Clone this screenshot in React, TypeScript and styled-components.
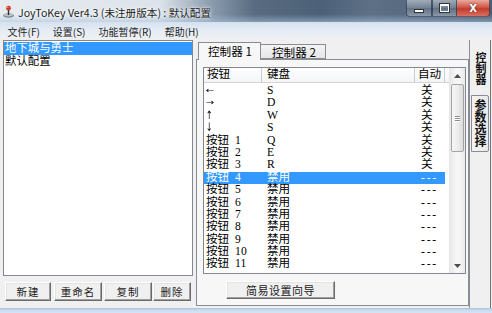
import React from 'react'
import styled, { createGlobalStyle } from 'styled-components'

const GlobalStyle = createGlobalStyle`
  html, body {
    margin: 0;
    padding: 0;
    background: #f0f0f0;
  }
  body {
    font-family: "Noto Sans CJK SC", "Liberation Sans", sans-serif;
  }
`

const listFont = `"Liberation Serif", "Noto Sans CJK SC", serif`

const Window = styled.div`
  width: 492px;
  height: 313px;
  display: flex;
  flex-direction: column;
  background: #f0f0f0;
  overflow: hidden;
`

const TitleBar = styled.div`
  height: 22px;
  flex: none;
  display: flex;
  align-items: flex-start;
  background:
    linear-gradient(180deg, rgba(0, 0, 0, 0) 65%, rgba(170, 195, 222, 0.55) 100%),
    linear-gradient(90deg, #e7ecf1 0px, #dce3ea 160px, #8a9bad 212px, #586b80 255px, #4c6077 320px, #5d7086 370px, #4a5e75 100%);
`

const AppIcon = styled.svg`
  width: 13px;
  height: 13px;
  margin: 5px 3px 0 2px;
  flex: none;
`

const TitleText = styled.div`
  margin-top: 5px;
  font-size: 10.6px;
  line-height: 16px;
  color: #1a1a1a;
  white-space: nowrap;
  text-shadow: 0 0 4px #fff, 0 0 2px #fff;
`

const Captions = styled.div`
  margin-left: auto;
  margin-right: 2px;
  display: flex;
  height: 17px;
`

const CaptionButton = styled.div<{ $w: number; $close?: boolean }>`
  width: ${({ $w }) => $w}px;
  height: 100%;
  box-sizing: border-box;
  display: flex;
  align-items: center;
  justify-content: center;
  border: 1px solid rgba(30, 40, 55, 0.6);
  border-top: none;
  border-left: ${({ $close }) => ($close ? 'none' : '1px solid rgba(30, 40, 55, 0.6)')};
  border-radius: ${({ $close }) => ($close ? '0 0 4px 0' : '0')};
  background: ${({ $close }) =>
    $close
      ? 'linear-gradient(180deg, #e9a99c 0%, #d1584a 45%, #c23b2e 55%, #d8705e 100%)'
      : 'linear-gradient(180deg, rgba(255,255,255,0.45) 0%, rgba(255,255,255,0.18) 50%, rgba(255,255,255,0.08) 51%, rgba(255,255,255,0.3) 100%)'};
  color: #fff;
  font-family: "DejaVu Sans", sans-serif;
  font-weight: bold;
  font-size: 10px;
  text-shadow: 0 0 2px #333;
`

const FirstCaption = styled(CaptionButton)`
  border-radius: 0 0 0 4px;
`

const MinGlyph = styled.span`
  width: 8px;
  height: 2px;
  margin-top: 5px;
  background: #fff;
  border: 1px solid #333;
`

const MaxGlyph = styled.span`
  width: 7px;
  height: 5px;
  border: 1px solid #fff;
  border-top-width: 2px;
  outline: 1px solid #333;
`

const MenuBar = styled.div`
  height: 18px;
  flex: none;
  display: flex;
  align-items: center;
  padding-left: 1px;
  background: linear-gradient(180deg, #d6e1ee 0%, #e6edf6 50%, #f0f0f0 100%);
  font-size: 10px;
  color: #1e1e1e;
`

const MenuItem = styled.span`
  padding: 0 6.5px;
  white-space: nowrap;
`

const Body = styled.div`
  flex: 1;
  display: flex;
  min-height: 0;
`

const LeftPane = styled.div`
  width: 192px;
  margin-left: 3px;
  display: flex;
  flex-direction: column;
  padding-bottom: 7px;
`

const ProfileList = styled.div`
  flex: 1;
  background: #fff;
  border: 1px solid #828790;
  padding-top: 1px;
  margin-bottom: 6px;
`

const ProfileItem = styled.div<{ $selected?: boolean }>`
  height: 12.5px;
  line-height: 12.5px;
  padding-left: 1px;
  font-family: ${listFont};
  font-size: 11.4px;
  color: ${({ $selected }) => ($selected ? '#fff' : '#000')};
  background: ${({ $selected }) => ($selected ? '#3399ff' : 'transparent')};
  white-space: nowrap;
`

const ButtonRow = styled.div`
  display: flex;
  height: 19px;
  padding-left: 2px;
`

const RaisedButton = styled.div<{ $w: number; $gap?: number }>`
  width: ${({ $w }) => $w}px;
  margin-left: ${({ $gap }) => $gap ?? 0}px;
  height: 100%;
  box-sizing: border-box;
  display: flex;
  align-items: center;
  justify-content: center;
  background: #f0f0f0;
  border: 1px solid;
  border-color: #ffffff #6a6a6a #6a6a6a #ffffff;
  box-shadow: inset -1px -1px #a0a0a0, inset 1px 1px #e3e3e3;
  font-size: 10.5px;
  color: #202020;
  letter-spacing: 1px;
  white-space: nowrap;
`

const RightPane = styled.div`
  flex: 1;
  display: flex;
  margin-left: 3px;
`

const TabArea = styled.div`
  width: 273px;
  display: flex;
  flex-direction: column;
  padding-top: 2px;
  padding-bottom: 2px;
`

const TabStrip = styled.div`
  height: 17px;
  display: flex;
  align-items: flex-end;
  padding-left: 2px;
  position: relative;
  z-index: 1;
`

const Tab = styled.div<{ $w: number; $active?: boolean }>`
  width: ${({ $w }) => $w}px;
  height: ${({ $active }) => ($active ? 18 : 15)}px;
  margin-bottom: ${({ $active }) => ($active ? -1 : 0)}px;
  box-sizing: border-box;
  border: 1px solid #898c95;
  border-bottom: ${({ $active }) => ($active ? 'none' : '1px solid #898c95')};
  border-left: ${({ $active }) => ($active ? '1px solid #898c95' : 'none')};
  background: ${({ $active }) => ($active ? '#f7f7f7' : 'linear-gradient(180deg, #f4f4f4, #e6e6e6)')};
  padding-left: ${({ $active }) => ($active ? 9 : 11)}px;
  font-size: 11.6px;
  line-height: ${({ $active }) => ($active ? 16 : 14)}px;
  color: #000;
  white-space: nowrap;
`

const TabPanel = styled.div`
  flex: 1;
  display: flex;
  flex-direction: column;
  border: 1px solid #898c95;
  background: #f7f7f7;
  padding: 7px 2px 6px 6px;
  min-height: 0;
`

const ListView = styled.div`
  flex: 1;
  display: flex;
  background: #fff;
  border: 1px solid #828790;
  min-height: 0;
  overflow: hidden;
`

const Table = styled.div`
  flex: 1;
  display: flex;
  flex-direction: column;
  font-family: ${listFont};
  font-size: 11.6px;
  color: #000;
`

const HeaderRow = styled.div`
  height: 14px;
  flex: none;
  display: flex;
  border-bottom: 1px solid #d5d5d5;
  background: linear-gradient(180deg, #ffffff, #f3f4f6);
`

const HeaderCell = styled.div<{ $w?: number; $pad: number }>`
  width: ${({ $w }) => ($w ? `${$w}px` : 'auto')};
  flex: ${({ $w }) => ($w ? 'none' : '1')};
  box-sizing: border-box;
  padding-left: ${({ $pad }) => $pad}px;
  border-right: ${({ $w }) => ($w ? '1px solid #c9ccd2' : 'none')};
  line-height: 14px;
  white-space: nowrap;
`

const Rows = styled.div`
  padding-top: 2px;
`

const Row = styled.div<{ $selected?: boolean }>`
  display: grid;
  grid-template-columns: 58px 153px 30px;
  width: max-content;
  height: 12.4px;
  line-height: 12.4px;
  color: ${({ $selected }) => ($selected ? '#fff' : '#000')};
  background: ${({ $selected }) => ($selected ? '#3399ff' : 'transparent')};
`

const Cell = styled.div<{ $pad: number }>`
  padding-left: ${({ $pad }) => $pad}px;
  white-space: nowrap;
  word-spacing: 3px;
  overflow: visible;
`

const Arrow = styled.span<{ $tall?: boolean }>`
  display: inline-block;
  font-family: "DejaVu Sans", sans-serif;
  font-size: 10px;
  line-height: 12px;
  color: #000;
  filter: grayscale(1);
  transform: ${({ $tall }) => ($tall ? 'scale(0.8, 1.15)' : 'scaleY(0.8)')};
  transform-origin: left center;
`

const Dashes = styled.span`
  letter-spacing: 1.8px;
`

const ScrollBar = styled.div`
  width: 15px;
  flex: none;
  display: flex;
  flex-direction: column;
  align-items: center;
  border-left: 1px solid #e6e6e6;
  background: linear-gradient(90deg, #e9e9e9 0%, #f6f6f6 40%, #f6f6f6 60%, #e9e9e9 100%);
`

const ScrollArrow = styled.div`
  width: 15px;
  height: 15px;
  display: flex;
  align-items: center;
  justify-content: center;
`

const Thumb = styled.div`
  width: 13px;
  height: 68px;
  margin-top: 1px;
  box-sizing: border-box;
  border: 1px solid #a3a3a3;
  border-radius: 2px;
  background: linear-gradient(90deg, #f7f7f7 0%, #ededed 50%, #dcdcdc 100%);
  display: flex;
  flex-direction: column;
  align-items: center;
  justify-content: center;
  gap: 1px;
`

const Grip = styled.span`
  width: 5px;
  height: 1px;
  background: #8a8a8a;
  box-shadow: 0 1px #fff;
`

const Track = styled.div`
  flex: 1;
`

const WizardRow = styled.div`
  display: flex;
  margin-top: 7px;
  padding-left: 23px;
`

const WizardButton = styled(RaisedButton)`
  height: 18px;
  font-size: 11px;
  letter-spacing: 0.5px;
`

const VTabs = styled.div`
  width: 20px;
  display: flex;
  flex-direction: column;
  border-left: 1px solid #898c95;
  border-right: 1px solid #6f7378;
  margin-right: 1px;
`

const VTab = styled.div<{ $active?: boolean }>`
  writing-mode: vertical-rl;
  font-size: ${({ $active }) => ($active ? 11 : 12)}px;
  font-weight: bold;
  color: #111;
  line-height: 16px;
  box-sizing: border-box;
  ${({ $active }) =>
    $active
      ? `
    height: 54px;
    padding-top: 12px;
    padding-right: 1px;
  `
      : `
    height: 57px;
    margin: 1px 1px 0 1px;
    border: 1px solid #898c95;
    border-radius: 0 2px 2px 0;
    background: linear-gradient(90deg, #f4f4f4, #e8e8e8);
    padding-top: 3px;
  `}
`

const BottomFrame = styled.div`
  height: 5px;
  flex: none;
  background: linear-gradient(180deg, #a8bfd9 0%, #c9dbef 40%, #d6e4f3 100%);
`

type Line = {
  button: string
  key: string
  auto: string
  arrow?: 'h' | 'v'
}

const lines: Line[] = [
  { button: '←', key: 'S', auto: '关', arrow: 'h' },
  { button: '→', key: 'D', auto: '关', arrow: 'h' },
  { button: '↑', key: 'W', auto: '关', arrow: 'v' },
  { button: '↓', key: 'S', auto: '关', arrow: 'v' },
  { button: '按钮 1', key: 'Q', auto: '关' },
  { button: '按钮 2', key: 'E', auto: '关' },
  { button: '按钮 3', key: 'R', auto: '关' },
  ...[4, 5, 6, 7, 8, 9, 10, 11].map((n) => ({
    button: `按钮 ${n}`,
    key: '禁用',
    auto: '---',
  })),
]

const SELECTED_LINE = 7

const App = () => {
  return (
    <>
      <GlobalStyle />
      <Window>
        <TitleBar>
          <AppIcon viewBox="0 0 13 13">
            <ellipse cx="6.5" cy="10.5" rx="5.5" ry="2.2" fill="#7d8790" />
            <ellipse cx="6.5" cy="9.8" rx="4.6" ry="1.6" fill="#b9c1c8" />
            <rect x="5.8" y="3.5" width="1.4" height="6.5" fill="#2b2b2b" />
            <circle cx="6.5" cy="3.2" r="2.4" fill="#d23a2a" />
            <circle cx="5.8" cy="2.5" r="0.8" fill="#f4a89c" />
          </AppIcon>
          <TitleText>JoyToKey Ver4.3 (未注册版本) : 默认配置</TitleText>
          <Captions>
            <FirstCaption $w={26}>
              <MinGlyph />
            </FirstCaption>
            <CaptionButton $w={25}>
              <MaxGlyph />
            </CaptionButton>
            <CaptionButton $w={33} $close>
              X
            </CaptionButton>
          </Captions>
        </TitleBar>

        <MenuBar>
          <MenuItem>文件(F)</MenuItem>
          <MenuItem>设置(S)</MenuItem>
          <MenuItem>功能暂停(R)</MenuItem>
          <MenuItem>帮助(H)</MenuItem>
        </MenuBar>

        <Body>
          <LeftPane>
            <ProfileList>
              <ProfileItem $selected>地下城与勇士</ProfileItem>
              <ProfileItem>默认配置</ProfileItem>
            </ProfileList>
            <ButtonRow>
              <RaisedButton $w={46}>新建</RaisedButton>
              <RaisedButton $w={48} $gap={3}>重命名</RaisedButton>
              <RaisedButton $w={48} $gap={2}>复制</RaisedButton>
              <RaisedButton $w={38} $gap={1}>删除</RaisedButton>
            </ButtonRow>
          </LeftPane>

          <RightPane>
            <TabArea>
              <TabStrip>
                <Tab $w={63} $active>控制器 1</Tab>
                <Tab $w={65}>控制器 2</Tab>
              </TabStrip>
              <TabPanel>
                <ListView>
                  <Table>
                    <HeaderRow>
                      <HeaderCell $w={58} $pad={3}>按钮</HeaderCell>
                      <HeaderCell $w={153} $pad={5}>键盘</HeaderCell>
                      <HeaderCell $w={30} $pad={3}>自动</HeaderCell>
                      <HeaderCell $pad={0} />
                    </HeaderRow>
                    <Rows>
                      {lines.map((line, i) => (
                        <Row key={i} $selected={i === SELECTED_LINE}>
                          <Cell $pad={2}>
                            {line.arrow ? (
                              <Arrow $tall={line.arrow === 'v'}>{line.button}</Arrow>
                            ) : (
                              line.button
                            )}
                          </Cell>
                          <Cell $pad={5}>{line.key}</Cell>
                          <Cell $pad={6}>
                            {line.auto === '---' ? <Dashes>{line.auto}</Dashes> : line.auto}
                          </Cell>
                        </Row>
                      ))}
                    </Rows>
                  </Table>
                  <ScrollBar>
                    <ScrollArrow>
                      <svg width="7" height="4" viewBox="0 0 7 4">
                        <path d="M0 4 L3.5 0 L7 4 Z" fill="#4d4d4d" />
                      </svg>
                    </ScrollArrow>
                    <Thumb>
                      <Grip />
                      <Grip />
                      <Grip />
                    </Thumb>
                    <Track />
                    <ScrollArrow>
                      <svg width="7" height="4" viewBox="0 0 7 4">
                        <path d="M0 0 L3.5 4 L7 0 Z" fill="#4d4d4d" />
                      </svg>
                    </ScrollArrow>
                  </ScrollBar>
                </ListView>
                <WizardRow>
                  <WizardButton $w={109}>简易设置向导</WizardButton>
                </WizardRow>
              </TabPanel>
            </TabArea>
            <VTabs>
              <VTab $active>控制器</VTab>
              <VTab>参数选择</VTab>
            </VTabs>
          </RightPane>
        </Body>
        <BottomFrame />
      </Window>
    </>
  )
}

export default App
